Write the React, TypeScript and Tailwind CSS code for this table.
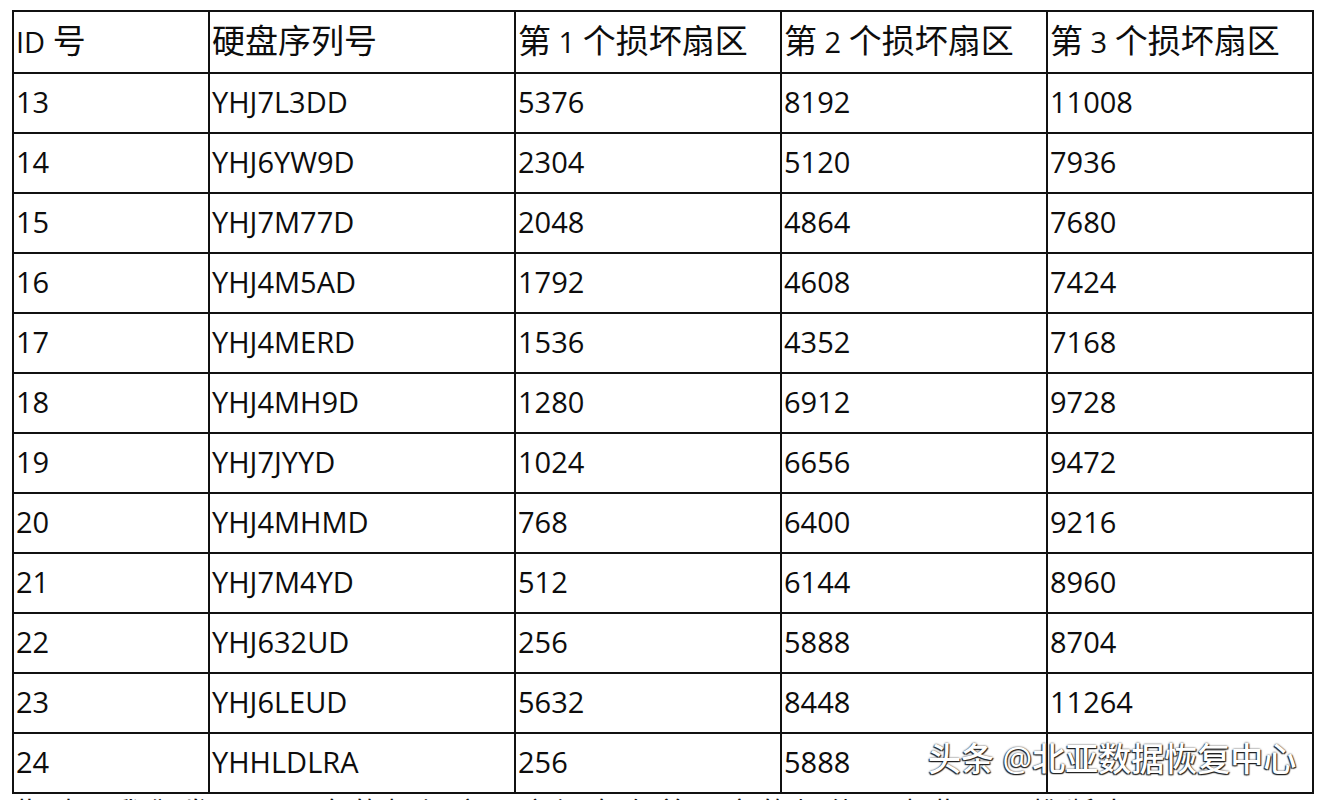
const rows: [string, string, string, string, string][] = [
  ['13', 'YHJ7L3DD', '5376', '8192', '11008'],
  ['14', 'YHJ6YW9D', '2304', '5120', '7936'],
  ['15', 'YHJ7M77D', '2048', '4864', '7680'],
  ['16', 'YHJ4M5AD', '1792', '4608', '7424'],
  ['17', 'YHJ4MERD', '1536', '4352', '7168'],
  ['18', 'YHJ4MH9D', '1280', '6912', '9728'],
  ['19', 'YHJ7JYYD', '1024', '6656', '9472'],
  ['20', 'YHJ4MHMD', '768', '6400', '9216'],
  ['21', 'YHJ7M4YD', '512', '6144', '8960'],
  ['22', 'YHJ632UD', '256', '5888', '8704'],
  ['23', 'YHJ6LEUD', '5632', '8448', '11264'],
  ['24', 'YHHLDLRA', '256', '5888', ''],
];

// CJK glyphs in the header are drawn larger than the latin ones
function Cjk({ children }: { children: string }) {
  return <span className="text-[33px]">{children}</span>;
}

const headers = [
  <>ID <Cjk>号</Cjk></>,
  <Cjk>硬盘序列号</Cjk>,
  <><Cjk>第</Cjk> 1 <Cjk>个损坏扇区</Cjk></>,
  <><Cjk>第</Cjk> 2 <Cjk>个损坏扇区</Cjk></>,
  <><Cjk>第</Cjk> 3 <Cjk>个损坏扇区</Cjk></>,
];
const widths = ['w-[196px]', 'w-[306px]', 'w-[266px]', 'w-[266px]', 'w-[266px]'];

export default function App() {
  return (
    <div
      className="relative h-[800px] w-[1326px] overflow-hidden bg-white text-[#0d0d0d]"
      style={{ fontFamily: '"Open Sans", "Noto Sans CJK SC", sans-serif' }}
    >
      <div className="pl-[12px] pt-[10px]">
        <table className="border-collapse text-[29px] leading-none">
          <thead>
            <tr className="h-[62px]">
              {headers.map((h, i) => (
                <th
                  key={i}
                  className={`${widths[i]} border-2 border-[#111] px-[2px] pb-[4px] text-left font-normal whitespace-nowrap`}
                >
                  {h}
                </th>
              ))}
            </tr>
          </thead>
          <tbody>
            {rows.map((r) => (
              <tr key={r[0]} className="h-[60px]">
                {r.map((c, i) => (
                  <td key={i} className="border-2 border-[#111] px-[2px] pb-[3px]">
                    {c}
                  </td>
                ))}
              </tr>
            ))}
          </tbody>
        </table>
        <p className="mt-[4px] text-[28px] leading-none tracking-[6px] text-[#111]">
          此时，我们发现，硬盘的损坏扇区之间存在着一定的规律，由此可以推断出
        </p>
      </div>

      {/* watermark */}
      <div
        className="absolute left-[928px] top-[742px] text-[33px] font-medium leading-none text-white"
        style={{ textShadow: '-1px 1px 1px #222, 1px 1px 1px #222, 0 0 2px #333' }}
      >
        头条 @北亚数据恢复中心
      </div>
    </div>
  );
}
